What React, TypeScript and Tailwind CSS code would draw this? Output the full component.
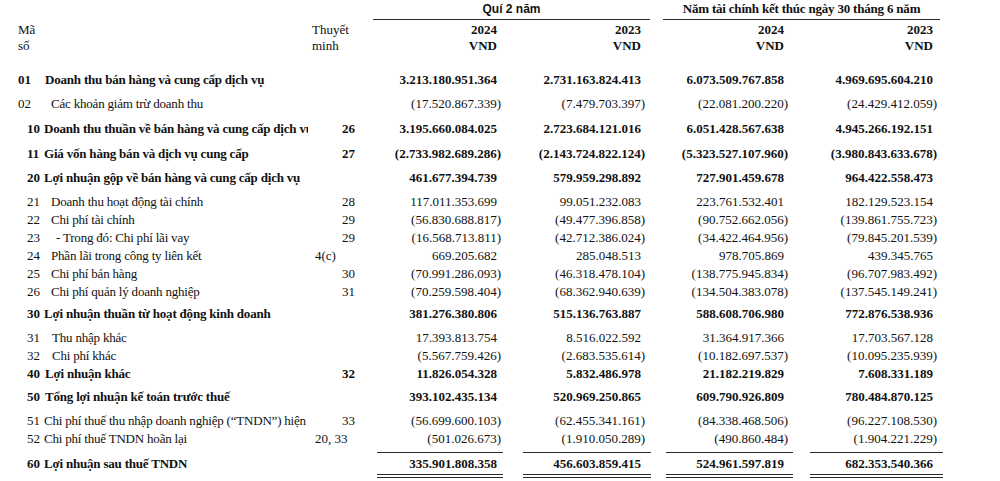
const cols = [
  { box: "ml-[15px] w-[126px]", pos: "pr-[6px]", neg: "pr-[2px]" },
  { box: "ml-[20px] w-[128px]", pos: "pr-[10px]", neg: "pr-[6px]" },
  { box: "ml-[15px] w-[127px]", pos: "pr-[9px]", neg: "pr-[5px]" },
  { box: "ml-[17px] w-[133px]", pos: "pr-[10px]", neg: "pr-[6px]" },
];

type Row = {
  code: string;
  label: string;
  note?: string;
  notePad?: string;
  vals: string[];
  bold?: boolean;
  codeCls: string;
  h: string;
  clip?: string;
};

const rows: Row[] = [
  { code: "01", label: "Doanh thu bán hàng và cung cấp dịch vụ", bold: true, codeCls: "pl-[18px] w-[45px]", h: "h-[24px] mt-[14px]", vals: ["3.213.180.951.364", "2.731.163.824.413", "6.073.509.767.858", "4.969.695.604.210"] },
  { code: "02", label: "Các khoản giảm trừ doanh thu", codeCls: "pl-[18px] w-[51px]", h: "h-[24px]", vals: ["(17.520.867.339)", "(7.479.703.397)", "(22.081.200.220)", "(24.429.412.059)"] },
  { code: "10", label: "Doanh thu thuần về bán hàng và cung cấp dịch vụ", bold: true, note: "26", codeCls: "pl-[27px] w-[44px]", h: "h-[25px]", clip: "w-[308px] mr-[4px]", vals: ["3.195.660.084.025", "2.723.684.121.016", "6.051.428.567.638", "4.945.266.192.151"] },
  { code: "11", label: "Giá vốn hàng bán và dịch vụ cung cấp", bold: true, note: "27", codeCls: "pl-[27px] w-[44px]", h: "h-[25px]", vals: ["(2.733.982.689.286)", "(2.143.724.822.124)", "(5.323.527.107.960)", "(3.980.843.633.678)"] },
  { code: "20", label: "Lợi nhuận gộp về bán hàng và cung cấp dịch vụ", bold: true, codeCls: "pl-[27px] w-[44px]", h: "h-[24px]", vals: ["461.677.394.739", "579.959.298.892", "727.901.459.678", "964.422.558.473"] },
  { code: "21", label: "Doanh thu hoạt động tài chính", note: "28", codeCls: "pl-[27px] w-[51px]", h: "h-[18px] mt-[3px]", vals: ["117.011.353.699", "99.051.232.083", "223.761.532.401", "182.129.523.154"] },
  { code: "22", label: "Chi phí tài chính", note: "29", codeCls: "pl-[27px] w-[51px]", h: "h-[18px]", vals: ["(56.830.688.817)", "(49.477.396.858)", "(90.752.662.056)", "(139.861.755.723)"] },
  { code: "23", label: "- Trong đó: Chi phí lãi vay", note: "29", codeCls: "pl-[27px] w-[56px]", h: "h-[18px]", vals: ["(16.568.713.811)", "(42.712.386.024)", "(34.422.464.956)", "(79.845.201.539)"] },
  { code: "24", label: "Phần lãi trong công ty liên kết", note: "4(c)", notePad: "pl-[3px]", codeCls: "pl-[27px] w-[51px]", h: "h-[18px]", vals: ["669.205.682", "285.048.513", "978.705.869", "439.345.765"] },
  { code: "25", label: "Chi phí bán hàng", note: "30", codeCls: "pl-[27px] w-[51px]", h: "h-[18px]", vals: ["(70.991.286.093)", "(46.318.478.104)", "(138.775.945.834)", "(96.707.983.492)"] },
  { code: "26", label: "Chi phí quản lý doanh nghiệp", note: "31", codeCls: "pl-[27px] w-[51px]", h: "h-[18px]", vals: ["(70.259.598.404)", "(68.362.940.639)", "(134.504.383.078)", "(137.545.149.241)"] },
  { code: "30", label: "Lợi nhuận thuần từ hoạt động kinh doanh", bold: true, codeCls: "pl-[27px] w-[44px]", h: "h-[26px]", vals: ["381.276.380.806", "515.136.763.887", "588.608.706.980", "772.876.538.936"] },
  { code: "31", label: "Thu nhập khác", codeCls: "pl-[27px] w-[52px]", h: "h-[18px] mt-[2px]", vals: ["17.393.813.754", "8.516.022.592", "31.364.917.366", "17.703.567.128"] },
  { code: "32", label: "Chi phí khác", codeCls: "pl-[27px] w-[52px]", h: "h-[18px]", vals: ["(5.567.759.426)", "(2.683.535.614)", "(10.182.697.537)", "(10.095.235.939)"] },
  { code: "40", label: "Lợi nhuận khác", bold: true, note: "32", codeCls: "pl-[27px] w-[45px]", h: "h-[18px]", vals: ["11.826.054.328", "5.832.486.978", "21.182.219.829", "7.608.331.189"] },
  { code: "50", label: "Tổng lợi nhuận kế toán trước thuế", bold: true, codeCls: "pl-[27px] w-[45px]", h: "h-[24px] mt-[2px]", vals: ["393.102.435.134", "520.969.250.865", "609.790.926.809", "780.484.870.125"] },
  { code: "51", label: "Chi phí thuế thu nhập doanh nghiệp (“TNDN”) hiện", note: "33", codeCls: "pl-[27px] w-[44px]", h: "h-[18px] mt-[3px]", vals: ["(56.699.600.103)", "(62.455.341.161)", "(84.338.468.506)", "(96.227.108.530)"] },
  { code: "52", label: "Chi phí thuế TNDN hoãn lại", note: "20, 33", notePad: "pl-[3px]", codeCls: "pl-[27px] w-[44px]", h: "h-[18px]", vals: ["(501.026.673)", "(1.910.050.289)", "(490.860.484)", "(1.904.221.229)"] },
];

const total = ["335.901.808.358", "456.603.859.415", "524.961.597.819", "682.353.540.366"];

function LineItem({ r }: { r: Row }) {
  return (
    <div className={`flex items-center ${r.h} ${r.bold ? "font-bold" : ""}`}>
      <div className={`flex shrink-0 overflow-hidden whitespace-nowrap ${r.clip ?? "w-[312px]"}`}>
        <span className={`${r.codeCls} shrink-0`}>{r.code}</span>
        <span className="tracking-[-0.2px]">{r.label}</span>
      </div>
      <div className={`w-[50px] shrink-0 whitespace-nowrap ${r.notePad ?? "pl-[30px]"}`}>{r.note}</div>
      {r.vals.map((v, i) => (
        <div key={i} className={`${cols[i].box} shrink-0 text-right ${v.startsWith("(") ? cols[i].neg : cols[i].pos}`}>
          {v}
        </div>
      ))}
    </div>
  );
}

export default function App() {
  return (
    <div className="h-[481px] w-[1000px] overflow-hidden bg-white font-['Liberation_Serif',serif] text-[13px] leading-[16px] text-[#111]">
      {/* period headings */}
      <div className="flex h-[20px] font-bold">
        <div className="ml-[373px] w-[277px] border-b-[1.5px] border-[#2a2a2a] pt-[2px] text-center font-['Liberation_Sans',sans-serif] text-[12px] leading-[15px]">
          Quí 2 năm
        </div>
        <div className="ml-[13px] w-[277px] border-b-[1.5px] border-[#2a2a2a] pt-[1px] text-center tracking-[-0.2px]">
          Năm tài chính kết thúc ngày 30 tháng 6 năm
        </div>
      </div>
      <div className="mt-[2px] flex h-[16px] items-center">
        <div className="w-[312px] shrink-0 pl-[18px]">Mã</div>
        <div className="w-[50px] shrink-0">Thuyết</div>
        {["2024", "2023", "2024", "2023"].map((y, i) => (
          <div key={i} className={`${cols[i].box} ${cols[i].pos} shrink-0 text-right font-bold`}>{y}</div>
        ))}
      </div>
      <div className="flex h-[16px] items-center">
        <div className="w-[312px] shrink-0 pl-[18px]">số</div>
        <div className="w-[50px] shrink-0">minh</div>
        {cols.map((c, i) => (
          <div key={i} className={`${c.box} ${c.pos} shrink-0 text-right font-bold`}>VND</div>
        ))}
      </div>

      {rows.map((r) => (
        <LineItem key={r.code} r={r} />
      ))}

      {/* profit after tax */}
      <div className="mt-[4px] flex h-[26px] font-bold">
        <div className="flex w-[312px] shrink-0 items-center pt-[1px] pb-[4px]">
          <span className="w-[44px] shrink-0 pl-[27px]">60</span>
          <span className="tracking-[-0.2px]">Lợi nhuận sau thuế TNDN</span>
        </div>
        <div className="w-[50px] shrink-0" />
        {total.map((v, i) => (
          <div
            key={i}
            className={`${cols[i].box} ${cols[i].pos} flex shrink-0 items-center justify-end border-t-[1.5px] border-b-4 border-double border-[#2a2a2a]`}
          >
            {v}
          </div>
        ))}
      </div>
    </div>
  );
}
